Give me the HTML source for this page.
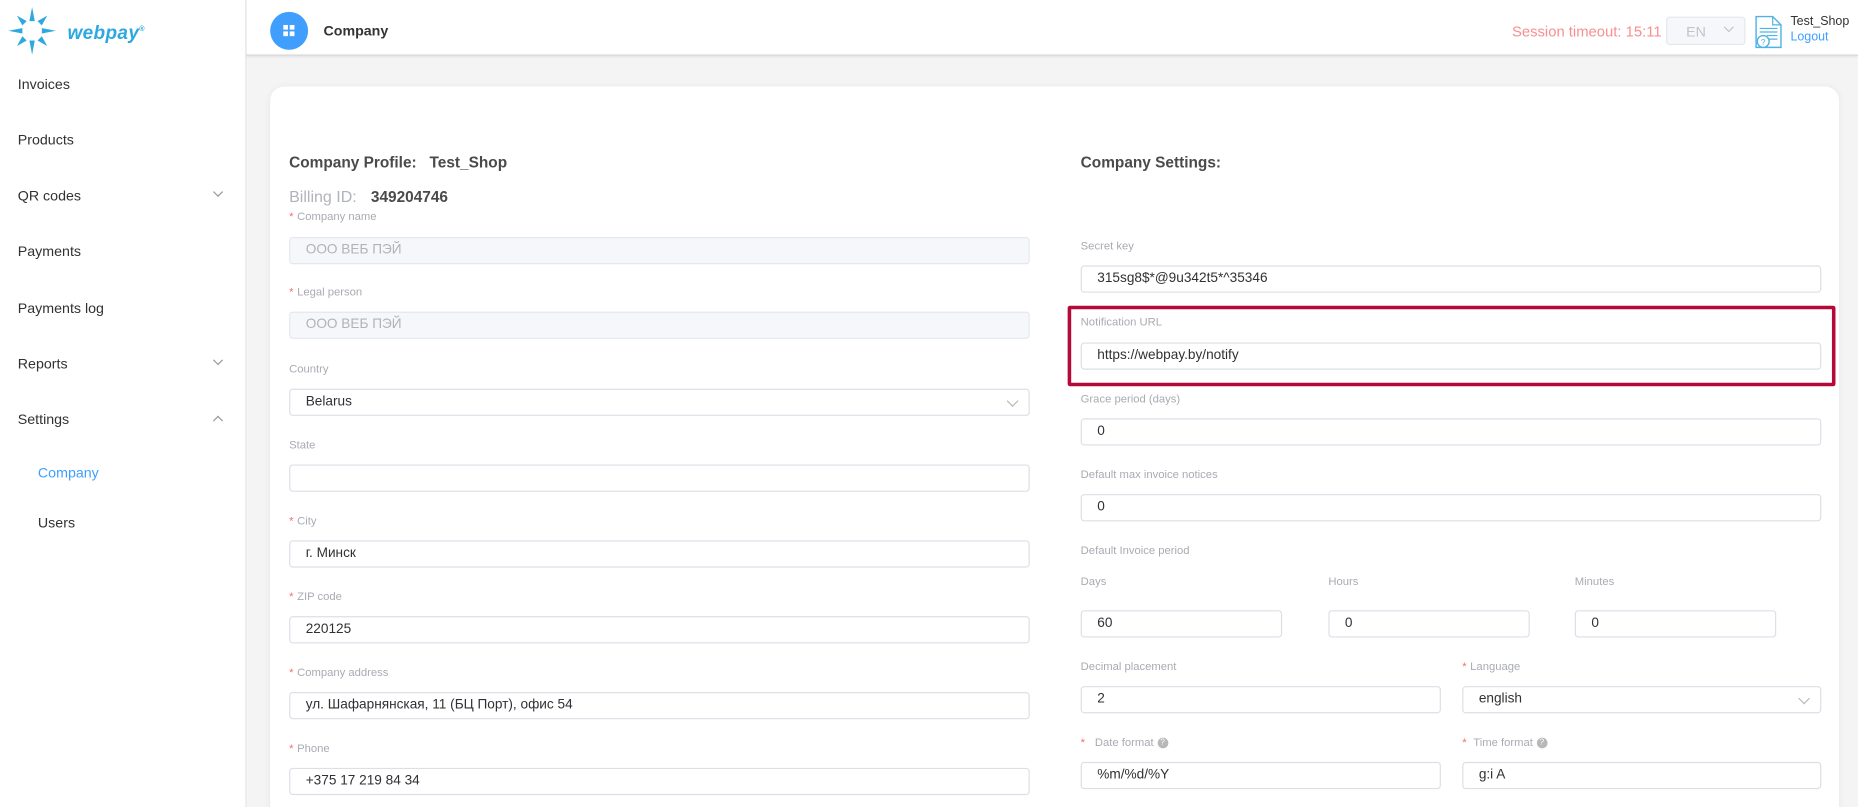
<!DOCTYPE html>
<html><head><meta charset="utf-8"><style>
*{box-sizing:border-box;margin:0;padding:0}
html,body{width:1858px;height:807px;overflow:hidden;background:#f4f4f5}
#w{position:absolute;left:0;top:0;width:1568px;height:681px;overflow:hidden;transform:scale(1.18495);transform-origin:0 0;font-family:"Liberation Sans",Arial,sans-serif;background:#f4f4f5}
.a{position:absolute}
#side{left:0;top:0;width:208px;height:681px;background:#fff;border-right:1px solid #e6e6e6}
.nav{position:absolute;left:15px;font-size:12px;color:#303133;transform:translateY(-50%)}
.chev{position:absolute;left:181px;width:6px;height:6px;border-right:1px solid #999;border-bottom:1px solid #999}
#hdr{left:208px;top:0;width:1360px;height:47px;background:#fff;border-bottom:1px solid #d4d4d4;box-shadow:0 1px 2px rgba(0,0,0,.08)}
#card{left:228px;top:73px;width:1324px;height:640px;background:#fff;border-radius:12px;box-shadow:0 0 6px rgba(0,0,0,.05)}
.lb{position:absolute;font-size:9.5px;color:#a8abb2;transform:translateY(-50%);white-space:nowrap}
.lb i{color:#f56c6c;font-style:normal;margin-right:3px}
.in{position:absolute;height:23px;border:1px solid #dcdfe6;border-radius:3px;background:#fff;font-size:11.5px;color:#303133;padding-left:13px;line-height:21px;white-space:nowrap}
.dis{background:#f5f7fa;color:#b0b3b9;border-color:#e4e7ed}
.sel::after{content:"";position:absolute;right:10px;top:6px;width:6px;height:6px;border-right:1px solid #b8b8b8;border-bottom:1px solid #b8b8b8;transform:rotate(45deg)}
.h{position:absolute;font-size:13px;font-weight:bold;color:#4a4a4a;transform:translateY(-50%);white-space:nowrap}
.q{display:inline-block;width:9px;height:9px;border-radius:50%;background:#b8b8b8;color:#fff;font-size:7px;line-height:9px;text-align:center;vertical-align:1px;margin-left:3px}
</style></head><body><div id="w">
<div id="side" class="a">
<svg class="a" style="left:7px;top:5px" width="42" height="42" viewBox="0 0 46 44">
<g fill="#2ea8e0">
<polygon points="22,0 24.5,13 19.5,13"/><polygon points="22,44 24.5,31 19.5,31"/>
<polygon points="0,22 13,19.5 13,24.5"/><polygon points="44,22 31,19.5 31,24.5"/>
<polygon points="8,8 17,13 13,17"/><polygon points="36,8 27,13 31,17"/>
<polygon points="8,36 17,31 13,27"/><polygon points="36,36 27,31 31,27"/>
</g></svg>
<div class="a" style="left:57px;top:20px;font-size:16px;font-weight:bold;font-style:italic;color:#2ea8e0;letter-spacing:.3px">webpay<span style="font-size:6px;vertical-align:7px;font-style:normal">®</span></div>
<div class="nav" style="top:71px">Invoices</div>
<div class="nav" style="top:118px">Products</div>
<div class="nav" style="top:165px">QR codes</div><div class="chev" style="top:159px;transform:rotate(45deg)"></div>
<div class="nav" style="top:212px">Payments</div>
<div class="nav" style="top:260px">Payments log</div>
<div class="nav" style="top:307px">Reports</div><div class="chev" style="top:301px;transform:rotate(45deg)"></div>
<div class="nav" style="top:354px">Settings</div><div class="chev" style="top:352px;transform:rotate(225deg)"></div>
<div class="nav" style="top:399px;left:32px;color:#409eff">Company</div>
<div class="nav" style="top:441px;left:32px">Users</div>
</div>
<div id="hdr" class="a">
<div class="a" style="left:20px;top:10px;width:32px;height:32px;border-radius:50%;background:#409eff"></div>
<svg class="a" style="left:31px;top:21px" width="10" height="10"><g fill="#fff"><rect x="0" y="0" width="4" height="4"/><rect x="5.5" y="0" width="4" height="4"/><rect x="0" y="5.5" width="4" height="4"/><rect x="5.5" y="5.5" width="4" height="4"/></g></svg>
<div class="a" style="left:65px;top:19px;font-size:12px;font-weight:bold;color:#333">Company</div>
<div class="a" style="left:1068px;top:20px;font-size:12.5px;color:#f78f8f">Session timeout: 15:11</div>
<div class="a" style="left:1198px;top:14px;width:67px;height:24px;background:#f5f7fa;border:1px solid #e4e7ed;border-radius:3px;font-size:12px;color:#c0c4cc;padding:5px 0 0 16px">EN<span style="position:absolute;right:10px;top:5px;width:6px;height:6px;border-right:1px solid #c0c4cc;border-bottom:1px solid #c0c4cc;transform:rotate(45deg)"></span></div>
<svg class="a" style="left:1273px;top:13px" width="24" height="28" viewBox="0 0 24 28"><path d="M1 1H15L22 8V27H1Z" fill="#fff" stroke="#4fb3e6" stroke-width="1.2"/><path d="M15 1V8H22" fill="none" stroke="#4fb3e6"/><g stroke="#4fb3e6"><line x1="4" y1="11" x2="19" y2="11"/><line x1="4" y1="14" x2="19" y2="14"/><line x1="10" y1="17" x2="19" y2="17"/><line x1="12" y1="20" x2="19" y2="20"/></g><circle cx="7" cy="22" r="5" fill="#fff" stroke="#4fb3e6" stroke-width="1.2"/><text x="7" y="25" font-size="7" text-anchor="middle" fill="#4fb3e6" font-family="Liberation Sans">?</text></svg>
<div class="a" style="left:1303px;top:12px;font-size:10.5px;color:#333">Test_Shop</div>
<div class="a" style="left:1303px;top:25px;font-size:10.5px;color:#409eff">Logout</div>
</div>
<div id="card" class="a"></div>
<div class="h" style="left:244px;top:137px">Company Profile:&nbsp;&nbsp;&nbsp;Test_Shop</div>
<div class="h" style="left:244px;top:166px;font-weight:normal;color:#b0b3b9;font-size:13.5px">Billing ID:</div>
<div class="h" style="left:313px;top:166px">349204746</div>
<div class="lb" style="left:244px;top:183px"><i>*</i>Company name</div>
<div class="in dis" style="left:244px;top:200px;width:625px">ООО ВЕБ ПЭЙ</div>
<div class="lb" style="left:244px;top:247px"><i>*</i>Legal person</div>
<div class="in dis" style="left:244px;top:263px;width:625px">ООО ВЕБ ПЭЙ</div>
<div class="lb" style="left:244px;top:312px">Country</div>
<div class="in sel" style="left:244px;top:328px;width:625px">Belarus</div>
<div class="lb" style="left:244px;top:376px">State</div>
<div class="in" style="left:244px;top:392px;width:625px"></div>
<div class="lb" style="left:244px;top:440px"><i>*</i>City</div>
<div class="in" style="left:244px;top:456px;width:625px">г. Минск</div>
<div class="lb" style="left:244px;top:504px"><i>*</i>ZIP code</div>
<div class="in" style="left:244px;top:520px;width:625px">220125</div>
<div class="lb" style="left:244px;top:568px"><i>*</i>Company address</div>
<div class="in" style="left:244px;top:584px;width:625px">ул. Шафарнянская, 11 (БЦ Порт), офис 54</div>
<div class="lb" style="left:244px;top:632px"><i>*</i>Phone</div>
<div class="in" style="left:244px;top:648px;width:625px">+375 17 219 84 34</div>
<div class="h" style="left:912px;top:137px">Company Settings:</div>
<div class="lb" style="left:912px;top:208px">Secret key</div>
<div class="in" style="left:912px;top:224px;width:625px">315sg8$*@9u342t5*^35346</div>
<div class="a" style="left:901px;top:258px;width:648px;height:68px;border:3px solid #b5093a;border-radius:2px"></div>
<div class="lb" style="left:912px;top:272px">Notification URL</div>
<div class="in" style="left:912px;top:289px;width:625px">https://webpay.by/notify</div>
<div class="lb" style="left:912px;top:337px">Grace period (days)</div>
<div class="in" style="left:912px;top:353px;width:625px">0</div>
<div class="lb" style="left:912px;top:401px">Default max invoice notices</div>
<div class="in" style="left:912px;top:417px;width:625px">0</div>
<div class="lb" style="left:912px;top:465px">Default Invoice period</div>
<div class="lb" style="left:912px;top:491px">Days</div>
<div class="lb" style="left:1121px;top:491px">Hours</div>
<div class="lb" style="left:1329px;top:491px">Minutes</div>
<div class="in" style="left:912px;top:515px;width:170px">60</div>
<div class="in" style="left:1121px;top:515px;width:170px">0</div>
<div class="in" style="left:1329px;top:515px;width:170px">0</div>
<div class="lb" style="left:912px;top:563px">Decimal placement</div>
<div class="lb" style="left:1234px;top:563px"><i>*</i>Language</div>
<div class="in" style="left:912px;top:579px;width:304px">2</div>
<div class="in sel" style="left:1234px;top:579px;width:303px">english</div>
<div class="lb" style="left:912px;top:627px"><i>*</i>&nbsp; Date format<span class="q">?</span></div>
<div class="lb" style="left:1234px;top:627px"><i>*</i>&nbsp;Time format<span class="q">?</span></div>
<div class="in" style="left:912px;top:643px;width:304px">%m/%d/%Y</div>
<div class="in" style="left:1234px;top:643px;width:303px">g:i A</div>
</div></body></html>
